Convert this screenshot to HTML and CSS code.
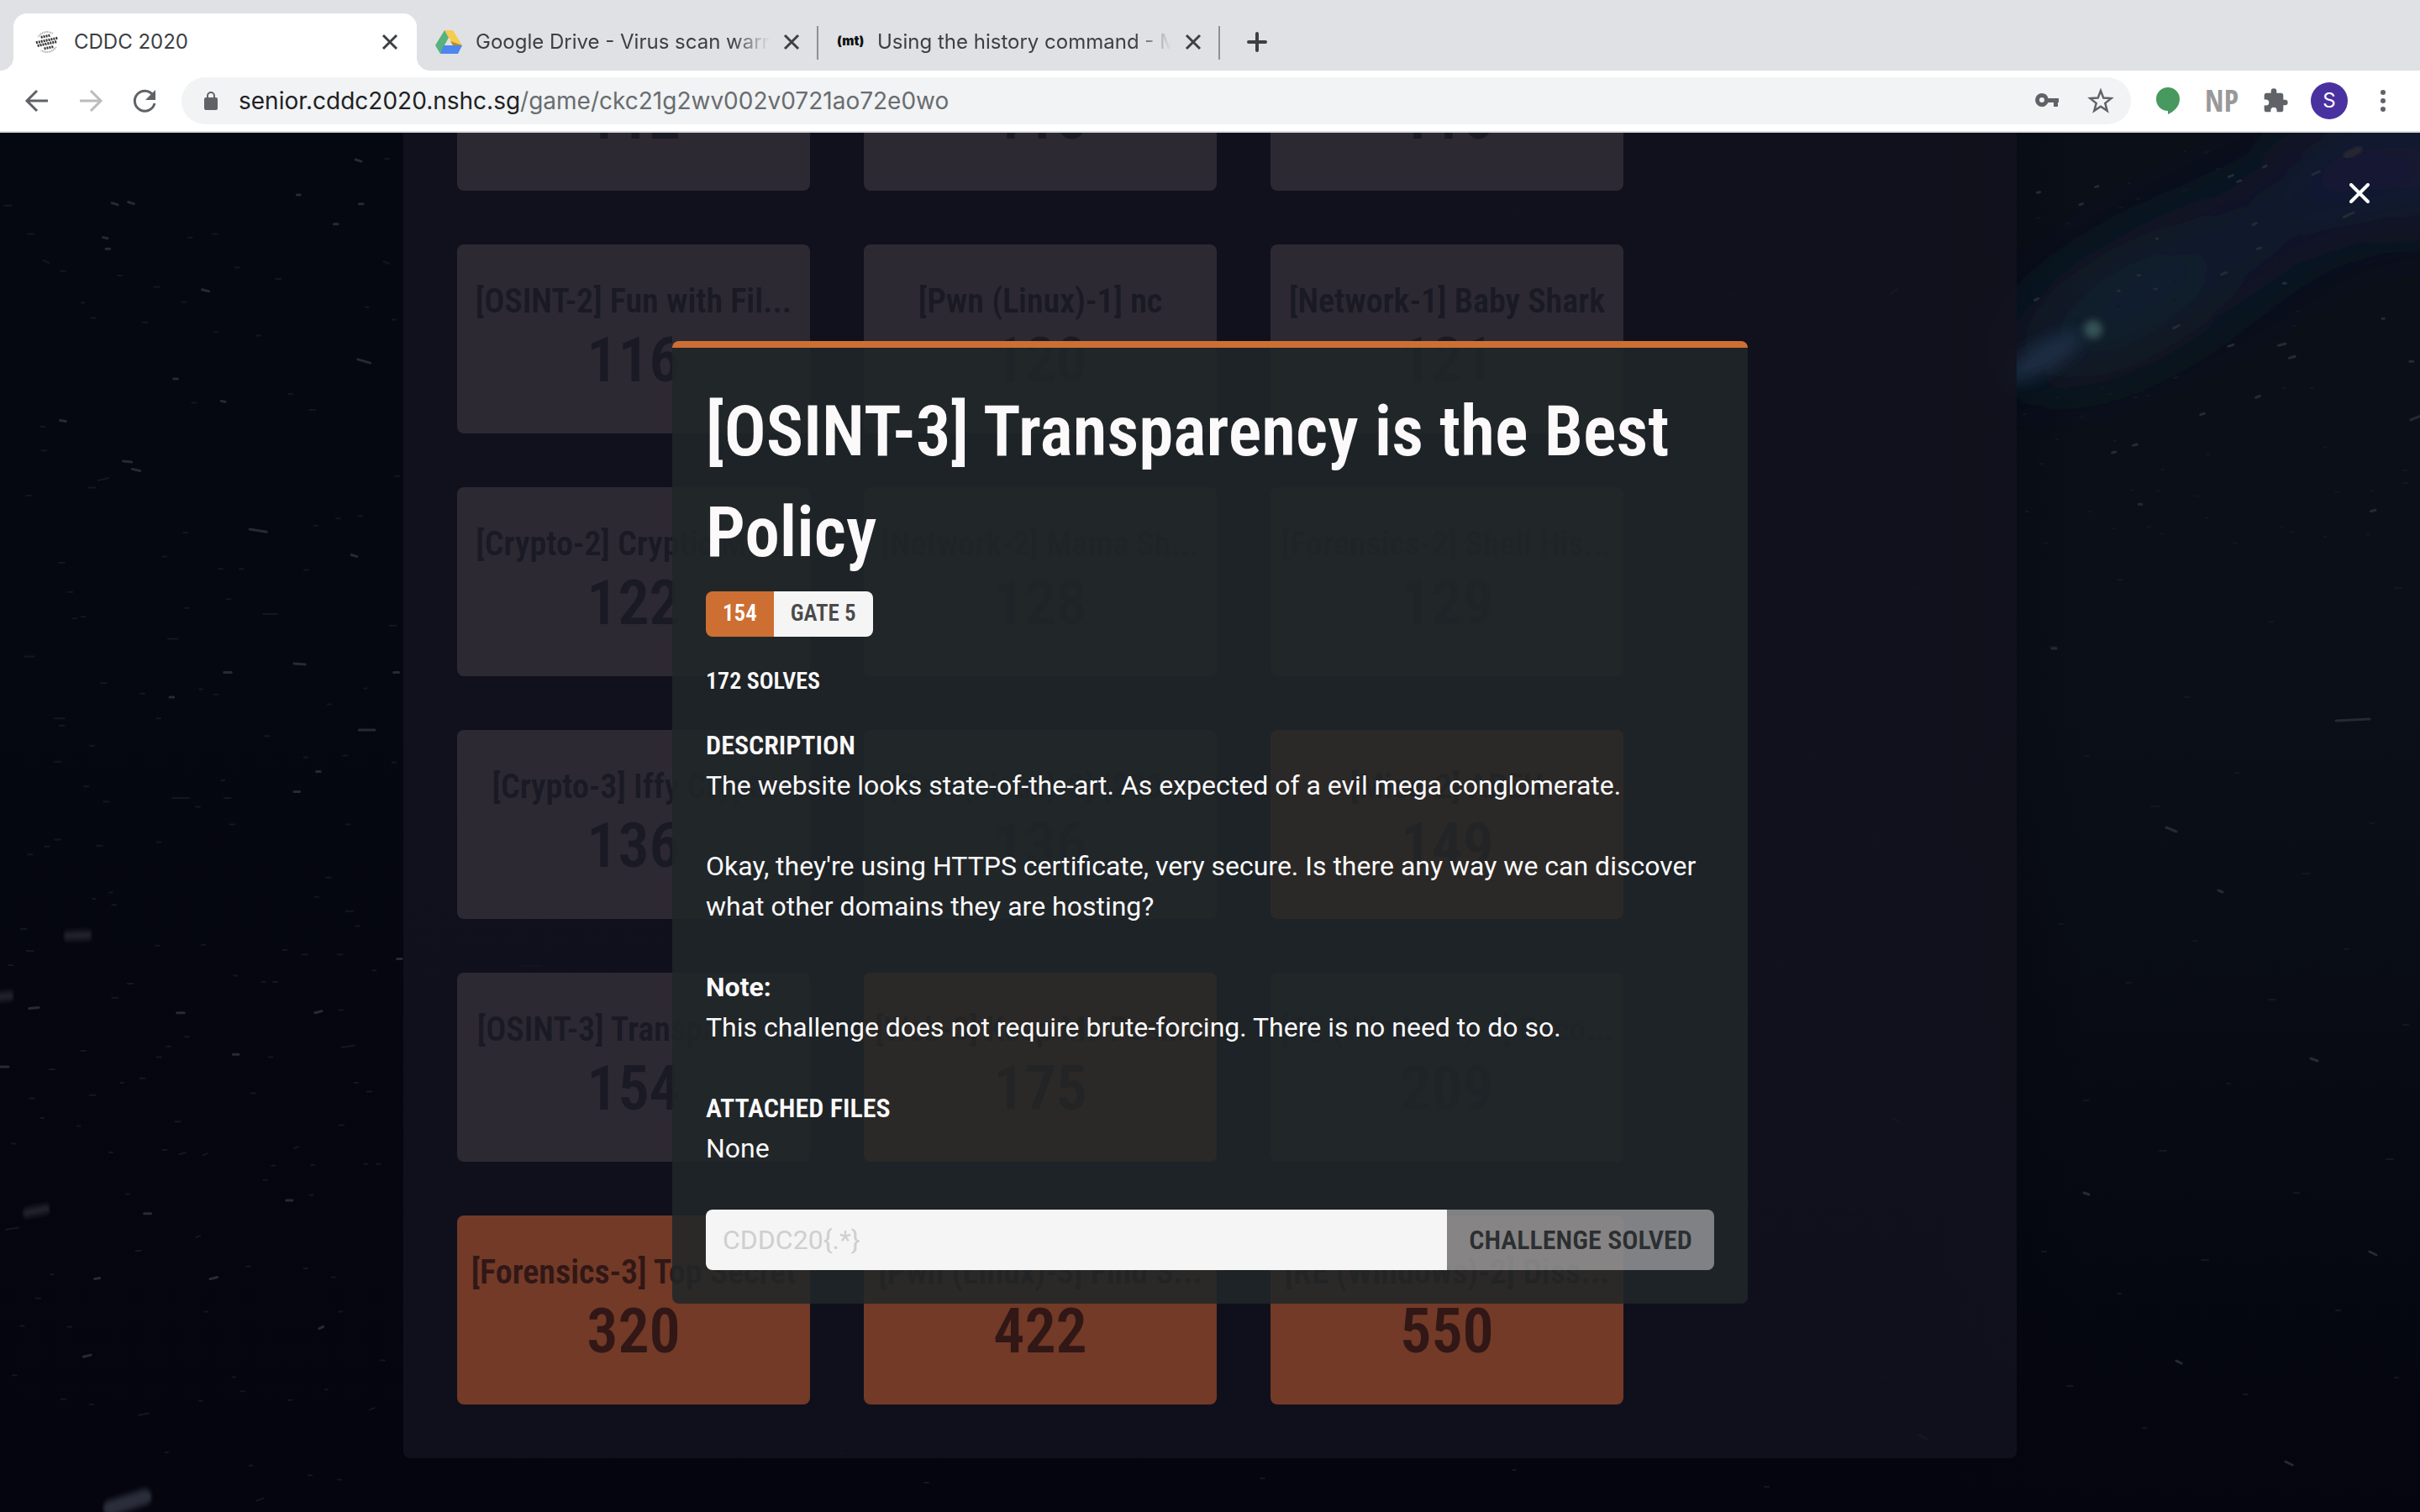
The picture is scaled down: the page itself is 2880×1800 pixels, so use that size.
FILE: index.html
```html
<!DOCTYPE html>
<html lang="en">
<head>
<meta charset="utf-8">
<title>CDDC 2020</title>
<link rel="stylesheet" href="styles.css">
</head>
<body>
<header class="browser">
  <nav class="tabs" aria-label="Tabs">
    <div class="tab tab-active">
      <svg class="tab-icon" viewBox="0 0 28 28" aria-hidden="true">
        <circle cx="14" cy="14" r="12" fill="none" stroke="#999" stroke-width="2" stroke-dasharray="1 1"/>
        <rect x="0" y="6" width="28" height="16" fill="#fff" transform="rotate(-12 14 14)"/>
        <g stroke="#333" stroke-width="3" stroke-dasharray="2 1" transform="rotate(-12 14 14)">
          <path d="M8 7h12M1 12h26M2 16h24M9 21h11"/>
        </g>
      </svg>
      <span class="tab-title">CDDC 2020</span>
      <button class="icon-button" aria-label="Close tab"><svg class="i20" viewBox="0 0 20 20"><path d="M2 2l16 16M18 2L2 18" stroke="#3c4043" stroke-width="3"/></svg></button>
    </div>
    <div class="tab tab-line">
      <svg class="tab-icon tab-icon-wide" viewBox="0 0 32 28" aria-hidden="true">
        <path d="M11 0h10l11 18H21z" fill="#f7cb4d"/>
        <path d="M11 0l5 9L6 28 0 18z" fill="#57b27c"/>
        <path d="M10 18h22l-5 10H6z" fill="#4c86ee"/>
        <path d="M16 9l5 9H11z" fill="#dfe1e5"/>
        <path d="M21 18l-3-5 14 5z" fill="#b28f2b"/>
      </svg>
      <span class="tab-title tab-fade">Google Drive - Virus scan warning</span>
      <button class="icon-button" aria-label="Close tab"><svg class="i20" viewBox="0 0 20 20"><path d="M2 2l16 16M18 2L2 18" stroke="#3c4043" stroke-width="3"/></svg></button>
    </div>
    <div class="tab tab-line">
      <span class="tab-icon tab-icon-wide tab-glyph">(mt)</span>
      <span class="tab-title tab-fade">Using the history command - Media Temple</span>
      <button class="icon-button" aria-label="Close tab"><svg class="i20" viewBox="0 0 20 20"><path d="M2 2l16 16M18 2L2 18" stroke="#3c4043" stroke-width="3"/></svg></button>
    </div>
    <button class="icon-button new-tab" aria-label="New tab"><svg class="i24" viewBox="0 0 24 24"><path d="M12 2v20M2 12h20" stroke="#3c4043" stroke-width="4" stroke-linecap="round"/></svg></button>
  </nav>
  <div class="toolbar">
    <button class="icon-button" aria-label="Back"><svg class="i32" viewBox="0 0 32 32"><path d="M29 16H4M16 4L4 16l12 12" fill="none" stroke="#5f6368" stroke-width="3"/></svg></button>
    <button class="icon-button" aria-label="Forward"><svg class="i32" viewBox="0 0 32 32"><path d="M3 16h25M16 4l12 12-12 12" fill="none" stroke="#babcbe" stroke-width="3"/></svg></button>
    <button class="icon-button" aria-label="Reload"><svg class="i32" viewBox="0 0 32 32"><path d="M26 9a12 12 0 1 0 2 10" fill="none" stroke="#5f6368" stroke-width="3"/><path d="M29 3v12H17z" fill="#5f6368"/></svg></button>
    <div class="omnibox">
      <svg class="lock" viewBox="0 0 18 24" aria-hidden="true"><rect x="1" y="8" width="16" height="15" rx="2" fill="#5f6368"/><path d="M5 9V6a4 4 0 0 1 8 0v3" fill="none" stroke="#5f6368" stroke-width="2"/></svg>
      <a class="url" href="#game"><span class="url-host">senior.cddc2020.nshc.sg</span>/game/ckc21g2wv002v0721ao72e0wo</a>
      <button class="icon-button" aria-label="Saved passwords"><svg class="i32" viewBox="0 0 32 32"><path fill="#5f6368" fill-rule="evenodd" d="M10 7a8 8 0 1 0 7.500 11H24v5h5v-5h1v-5H17.500A8 8 0 0 0 10 7zm0 5a3 3 0 1 1 0 6 3 3 0 0 1 0-6z"/></svg></button>
      <button class="icon-button" aria-label="Bookmark"><svg class="i32" viewBox="0 0 32 32"><path d="M16 4l3.300 8.600 9.200.5-7.200 5.800 2.400 8.900-7.700-5-7.700 5 2.400-8.900-7.200-5.800 9.200-.5z" fill="none" stroke="#5f6368" stroke-width="2.500"/></svg></button>
    </div>
    <button class="icon-button" aria-label="Chat extension"><svg class="i32" viewBox="0 0 32 32"><path d="M16 0a14 14 0 0 1 14 14c0 9-7 15-14 18v-4A14 14 0 0 1 16 0z" fill="#48995f"/></svg></button>
    <button class="icon-button np" aria-label="NP extension">NP</button>
    <button class="icon-button" aria-label="Extensions"><svg class="i32" viewBox="0 0 24 24"><path fill="#5f6368" d="M20.500 11H19V7c0-1.100-.9-2-2-2h-4V3.500a2.500 2.500 0 0 0-5 0V5H4c-1.100 0-2 .9-2 2v3.800h1.500a2.700 2.700 0 0 1 0 5.400H2V20c0 1.100.9 2 2 2h3.800v-1.500a2.700 2.700 0 0 1 5.400 0V22H17c1.100 0 2-.9 2-2v-4h1.500a2.500 2.500 0 0 0 0-5z"/></svg></button>
    <button class="avatar" aria-label="Profile">S</button>
    <button class="icon-button" aria-label="Menu"><svg class="i32" viewBox="0 0 32 32"><g fill="#5f6368"><circle cx="16" cy="6" r="3"/><circle cx="16" cy="16" r="3"/><circle cx="16" cy="26" r="3"/></g></svg></button>
  </div>
</header>

<main class="game" id="game">
  <svg class="sky" viewBox="0 158 2880 1642" preserveAspectRatio="xMidYMid slice" aria-hidden="true">
    <defs>
      <filter id="soft" x="-50%" y="-100%" width="200%" height="300%"><feGaussianBlur stdDeviation="45"/></filter>
      <filter id="glow" x="-50%" y="-100%" width="200%" height="300%"><feGaussianBlur stdDeviation="10"/></filter>
      <filter id="haze" x="-50%" y="-50%" width="200%" height="200%"><feGaussianBlur stdDeviation="4"/></filter>
    </defs>
    <g filter="url(#soft)">
      <ellipse cx="2620" cy="310" rx="280" ry="60" fill="#111a38" opacity=".7" transform="rotate(-28 2620 310)"/>
      <ellipse cx="2850" cy="200" rx="130" ry="60" fill="#1e2144" opacity=".7"/>
      <ellipse cx="2530" cy="370" rx="120" ry="40" fill="#1a2c36" opacity=".7" transform="rotate(-28 2530 370)"/>
    </g>
    <g filter="url(#glow)">
      <ellipse cx="2432" cy="425" rx="52" ry="16" fill="#20364c" opacity=".8" transform="rotate(-30 2432 425)"/>
    </g>
    <circle cx="2491" cy="392" r="11" fill="#355257" filter="url(#haze)"/>
    <g class="stars" transform="translate(0 150) scale(.3333 .95)">
      <g transform="scale(1 1.108)">
        <path class="star-dim" d="M15 90h25M100 122h20M155 152l20 3M215 164h18M290 200h12M325 217h16M420 169h14M510 222h16M145 340h14M150 367h16M95 418h16M315 409h24M350 401l38-3M210 494h20M243 527h16M260 557h14M290 555h14M90 600h32M195 670h36M212 678h18M360 630h20M550 182h20M650 199h14M670 126h16M760 122h16M840 160h14M985 173h18M915 237h16M765 233h14M1030 303h14M1105 321h20M685 313h16M580 487h14M655 460h14M780 501h14M855 501h14M940 552h50M1085 502h16M1120 452h14M1200 444h14M810 535h12M660 545h14M600 580h34M500 642h16M560 670h14M712 637h12M765 643h14M945 690h18M1085 714h14M1225 712h14M1165 850h16M1235 888h26M1330 955h12M1210 1000h14M1220 1042l46-2M960 1053h14M895 1094h18M725 1164l16-2M940 1192h14M1105 1209h14M640 1163l22-2M580 1158h16M625 1126h20M560 1053h16M595 1041h14M660 1030h16M500 1077h18M430 1082h12M400 986h20M455 970h22M290 1046h16M175 1067h20M105 1100h18M145 1122h12M275 1131h12M320 1096h20M42 1151h14M20 1248l46-2M128 1326h16M72 1357h14M240 1358h16M180 1299h12M45 1413h14M218 1440h16M320 1446h14M495 1458l36-2M590 1500h10M710 1442h12M860 1431h12M830 1415h10M730 1341h12M880 1290h14M700 1257l14-2M485 1272h18M450 1208h12M390 1161h12M1085 1292h12M1185 1302h12M1210 1341h12M1360 1396h14M1030 1441h12M1160 1429h10M1320 1452l16-2M1050 1156l16-2M1110 1175h14M1300 1174h12M1345 1174h14M1310 1092h18M1265 1082h14M1210 1130h18M970 1176h12M890 1515h12M940 1552l-24 3M1205 1531h14M1100 1526h14M160 815h16M195 807h22M100 824h16M345 814h20M370 764h18M300 747h16M195 719h22M320 701h16M560 810h14M615 760h60M700 770h14M790 740h12M800 760h24M820 790h18M1080 937h18M1205 937h16M1010 932h14M975 968h16M935 968h12M720 926h14M555 927h14M400 881h14M390 867h12M330 874h10M95 933h24M30 949h16M75 908h20M835 961h12M1300 636h10M1170 654h12M1400 720h14M1235 790h14M1125 872h12M1270 905h14M1390 565h24M1410 396h16M1370 153l20 3M1375 37h14M1400 219h14M1280 441h14M1305 205h12"/>
        <path class="star" d="M400 87l20 2M458 86l20 2M368 126l16 1M378 139h14M722 185l24 2M620 286h14M440 379l30 1M472 388l28 2M892 456l60 3M1050 608l40 1M800 618h26M1282 683h56M1278 264l44 4M1270 38l20 2M1282 88h14M1060 78h12M1255 485l20 2M1192 111h14M790 311l14 1M215 333l20 1M606 646h14M1050 753h20M1130 730h14M632 1003h26M832 1050h20M1125 1003l24-2M515 1230h24M1022 1215h22M338 1304l18-1M298 1392l26-2M750 1304l26-2M104 998l34-1M0 1064h30M1418 942h16M1140 1360l14-2M1406 618h18"/>
      </g>
      <g filter="url(#haze)">
        <path class="star-wide" d="M95 1362l70-5M0 1091l36-1M240 1015l75-1"/>
        <path class="star-comet" d="M395 1732l120-14"/>
      </g>
    </g>
    <g class="stars" transform="translate(2350 150) scale(.338 .3333)">
      <path class="star" d="M220 238l10-2M425 218l10-3M370 281l10-3M895 182l14-6M925 199l12-4M1017 147l10-5M1190 174l24-12M1300 325l34-16M980 353l12-6M870 530l16-6M1108 829l20-6M893 787l18-6M990 970l14-6M795 1031l14-4M558 1141l14-4M484 1167l12-3M578 1351h10M1395 1376l16-4M1535 1050l34-14M1532 841h12M1086 562h10M700 722l20-10M212 622l12-6M1070 784l24-6M995 439l12-4M1436 688h6M574 533h8M504 589h6M633 582h8M640 403h4"/>
      <path class="star-dim" d="M738 90h6M810 95l14-4M852 155l12-3M730 232l18-5M540 204h8M572 260h8M222 328h8M325 349h10M510 292h8M438 514h8M704 557h8M704 622h6M502 645h8M786 636h6M1060 468h6M1186 470h8M1132 662h8M1120 714h8M1180 76h8M1072 209h6M1076 275h6M700 900l14-4M318 937l10-3M288 970h6M172 1031l10-2M374 1040h8M450 935h8M470 958h12M560 969h12M608 962h8M490 1125h8M230 1206h10M286 1118h8M658 1227h8M818 1172h8M1084 937h10M1180 935h12M1230 1148h8M1510 1230h10M1508 1275h16M1396 1303h10M1270 1310l12-3M1230 1468h8M1112 1451h10M1076 1432h8M1382 1460h8M780 1322h8M644 1303h8M548 1301h10M400 1378h8M180 1377h8M484 1438h8M608 1432h10M656 1456h8M814 1400h8M912 1490h12M246 1490h8"/>
      <g filter="url(#haze)"><path class="star-wide" d="M1312 104l40-20"/></g>
    </g>
    <g class="stars">
      <path class="star-dim" d="M2440 770h8M2520 690h6M2600 830h6M2700 740h5M2480 900h6M2560 960h10M2660 920h4M2850 700h8M2820 980h5M2740 1040h8M2450 1100h5M2530 1170h6M2610 1120h4M2700 1190h8M2790 1130h5M2860 1220h6M2480 1310h5M2570 1370h8M2650 1290h4M2730 1420h6M2840 1380h8M2430 1490h5M2520 1540h4M2620 1500h8M2780 1560h5M2460 1650h7M2550 1700h4M2670 1660h5M2850 1640h4M530 200h5M1800 255h5M700 552h6M2060 350h5M2160 250h4M2250 400h5M2120 560h4M2280 700h5M2150 900h5M2230 1000h6M2120 1150h6M2260 1260h5M2200 1440h6M2140 1560h4M2240 1640h5M620 1150h22M560 1120h4M1000 1730h4M1100 1765h5M1500 1760h5M1800 1750h4M2100 1770h5"/>
      <path class="star" d="M2442 772h5M2578 985l12 5M2780 858l40-2M2640 1060l5 2M2750 1260l8 3M2480 1420l6 2M2820 1490l8 4M2590 1620l6 3M2720 1740l8 4M2250 350l8-6M2254 1332l6 4M2284 1708l10 6"/>
    </g>
  </svg>

  <section class="board" aria-label="Challenges">
    <article class="card"><p>112</p></article>
    <article class="card"><p>115</p></article>
    <article class="card"><p>116</p></article>
    <article class="card"><h3>[OSINT-2] Fun with Fil...</h3><p>116</p></article>
    <article class="card"><h3>[Pwn (Linux)-1] nc</h3><p>120</p></article>
    <article class="card"><h3>[Network-1] Baby Shark</h3><p>121</p></article>
    <article class="card"><h3>[Crypto-2] Cryptic Me...</h3><p>122</p></article>
    <article class="card"><h3>[Network-2] Mama Sh...</h3><p>128</p></article>
    <article class="card"><h3>[Forensics-2] Shell His...</h3><p>129</p></article>
    <article class="card"><h3>[Crypto-3] Iffy Crypto</h3><p>136</p></article>
    <article class="card"><h3>[Pwn (Linux)-2] (200...</h3><p>136</p></article>
    <article class="card card-open"><h3>[Misc-2] AREH</h3><p>149</p></article>
    <article class="card"><h3>[OSINT-3] Transparen...</h3><p>154</p></article>
    <article class="card card-open"><h3>[Web-3] Keep Me Posh...</h3><p>175</p></article>
    <article class="card"><h3>[RE (Windows)-1] Reco...</h3><p>209</p></article>
    <article class="card card-open"><h3>[Forensics-3] Top Secret</h3><p>320</p></article>
    <article class="card card-open"><h3>[Pwn (Linux)-3] Find S...</h3><p>422</p></article>
    <article class="card card-open"><h3>[RE (Windows)-2] Diss...</h3><p>550</p></article>
  </section>

  <div class="overlay">
    <button class="icon-button close" aria-label="Close"><svg class="i24" viewBox="0 0 24 24"><path d="M2 2l20 20M22 2L2 22" stroke="#fff" stroke-width="4" stroke-linecap="round"/></svg></button>
    <div class="modal" role="dialog" aria-labelledby="challenge-title">
      <h1 id="challenge-title">[OSINT-3] Transparency is the Best Policy</h1>
      <div class="badge"><span class="badge-points">154</span><span class="badge-gate">GATE 5</span></div>
      <p class="solves">172 SOLVES</p>
      <div class="body">
        <h2>DESCRIPTION</h2>
        <p>The website looks state-of-the-art. As expected of a evil mega conglomerate.</p>
        <p class="para">Okay, they're using HTTPS certificate, very secure. Is there any way we can discover what other domains they are hosting?</p>
        <p class="para"><b>Note:</b><br>This challenge does not require brute-forcing. There is no need to do so.</p>
        <h2 class="para">ATTACHED FILES</h2>
        <p>None</p>
      </div>
      <form class="answer">
        <input type="text" placeholder="CDDC20{.*}" aria-label="Flag">
        <button type="button" disabled>CHALLENGE SOLVED</button>
      </form>
    </div>
  </div>
</main>
</body>
</html>
```
FILE: styles.css
```css
* { box-sizing: border-box; }

html, body { height: 100%; }

body {
  margin: 0;
  display: flex;
  flex-direction: column;
  overflow: hidden;
  background: #050711;
  font-family: Roboto, "Liberation Sans", sans-serif;
}

h1, h2, h3, p { margin: 0; }
h1, h2, h3 { font-weight: 600; }
button { font: inherit; border: 0; padding: 0; }
svg { display: block; }

.i20 { width: 20px; height: 20px; }
.i24 { width: 24px; height: 24px; }
.i32 { width: 32px; height: 32px; }

.icon-button {
  display: flex;
  align-items: center;
  justify-content: center;
  flex: none;
  background: none;
}

/* Browser chrome */
.browser {
  flex: none;
  background: #fff;
  border-bottom: 2px solid #d9dbdf;
  font-family: Inter, "Liberation Sans", sans-serif;
}

.tabs {
  display: flex;
  height: 84px;
  padding: 16px 16px 0;
  background: #dfe1e5;
}

.tab {
  position: relative;
  display: flex;
  align-items: center;
  flex: 0 1 478px;
  min-width: 0;
  padding: 0 22px;
  gap: 16px;
  font-size: 24px;
  line-height: 32px;
  color: #3c4043;
}

.tab-active {
  flex-basis: 480px;
  padding-left: 26px;
  gap: 18px;
  background: #fff;
  border-radius: 16px 16px 0 0;
}

.tab-active::before,
.tab-active::after {
  content: "";
  position: absolute;
  bottom: 0;
  width: 16px;
  height: 16px;
}

.tab-active::before {
  right: 100%;
  background: radial-gradient(circle at 0 0, #dfe1e5 16px, #fff 16px);
}

.tab-active::after {
  left: 100%;
  background: radial-gradient(circle at 100% 0, #dfe1e5 16px, #fff 16px);
}

.tab-line::after {
  content: "";
  position: absolute;
  right: 0;
  top: 15px;
  width: 2px;
  height: 40px;
  background: #8e9194;
}

.tab-icon { flex: none; width: 28px; height: 28px; }
.tab-icon-wide { width: 32px; }

.tab-glyph {
  font-size: 15px;
  font-weight: 900;
  line-height: 26px;
  color: #111;
  text-align: center;
}

.tab-title {
  flex: 1;
  min-width: 0;
  overflow: hidden;
  white-space: nowrap;
}

.tab-fade {
  -webkit-mask-image: linear-gradient(to left, transparent, #000 44px);
  mask-image: linear-gradient(to left, transparent, #000 44px);
}

.new-tab { padding: 0 32px; }

.toolbar {
  display: flex;
  align-items: center;
  gap: 32px;
  height: 72px;
  padding: 0 28px;
}

.omnibox {
  display: flex;
  align-items: center;
  flex: 1;
  height: 56px;
  margin: 0 -4px;
  padding: 0 20px 0 26px;
  border-radius: 28px;
  background: #f1f3f4;
  gap: 32px;
}

.lock { flex: none; width: 18px; height: 24px; }

.url {
  flex: 1;
  margin-left: -8px;
  font-size: 28px;
  line-height: 36px;
  color: #696c70;
  text-decoration: none;
}

.url-host { color: #202124; }

.np {
  width: 32px;
  font-family: "Open Sans Condensed", "Roboto Condensed", Roboto, sans-serif;
  font-size: 36px;
  font-weight: 700;
  line-height: 32px;
  color: #999;
}

.avatar {
  flex: none;
  width: 44px;
  height: 44px;
  margin: 0 -6px;
  border-radius: 50%;
  background: #4a31a0;
  color: #fff;
  font-size: 24px;
  line-height: 44px;
}

/* Game page */
.game {
  position: relative;
  flex: 1;
  min-height: 0;
  display: flex;
  flex-direction: column;
  justify-content: flex-end;
  align-items: center;
  padding-bottom: 64px;
  overflow: hidden;
  background: linear-gradient(to top, rgba(4, 5, 14, 1), rgba(4, 5, 14, 0) 60%), linear-gradient(to right, #050711 16%, #060913 80%, #0b1018 86%);
}

.sky {
  position: absolute;
  inset: 0;
  width: 100%;
  height: 100%;
}

.stars path {
  fill: none;
  stroke-linecap: round;
  vector-effect: non-scaling-stroke;
}

.star-dim { stroke: #141721; stroke-width: 2px; }
.star { stroke: #272a35; stroke-width: 3px; }
.star-wide { stroke: #252732; stroke-width: 9px; }
.star-comet { stroke: #2b2d3a; stroke-width: 18px; }

.board {
  position: relative;
  display: grid;
  grid-template-columns: repeat(3, minmax(0, 420px));
  gap: 64px;
  width: 66.667%;
  padding: 64px;
  border-radius: 8px;
  background: rgba(19, 19, 30, .86);
}

.card {
  display: flex;
  flex-direction: column;
  justify-content: flex-end;
  height: 225px;
  padding: 0 12px 45px;
  border-radius: 8px;
  background: #2d2932;
  color: #191a24;
  font-family: "Roboto Condensed", Roboto, sans-serif;
  text-align: center;
  white-space: nowrap;
}

.card h3 { font-size: 40px; line-height: 56px; }
.card p { font-size: 74px; line-height: 84px; font-weight: 600; }

.card-open { background: #723a27; color: #311716; }

/* Challenge dialog */
.overlay {
  position: absolute;
  inset: 0;
  display: flex;
  align-items: center;
  justify-content: center;
}

.close {
  position: absolute;
  top: 48px;
  right: 48px;
  width: 48px;
  height: 48px;
}

.modal {
  width: 1280px;
  max-width: 90%;
  padding: 40px;
  border-top: 8px solid #cd6f33;
  border-radius: 8px;
  background: rgba(32, 38, 40, .86);
  background-clip: padding-box;
  color: #fbf9fa;
}

.modal h1,
.modal h2,
.badge,
.solves,
.answer button {
  font-family: "Roboto Condensed", Roboto, sans-serif;
  font-weight: 600;
}

.modal h1 { font-size: 83px; line-height: 120px; }

.badge {
  display: inline-flex;
  margin-top: 10px;
  border-radius: 8px;
  overflow: hidden;
  font-size: 27px;
  line-height: 52px;
  vertical-align: top;
}

.badge span { height: 54px; padding: 0 20px; }
.badge-points { background: #cd6f33; color: #fff; }
.badge-gate { background: #f5f5f5; color: #4a4a4a; }

.solves { margin-top: 33px; font-size: 28px; line-height: 40px; }

.body { margin-top: 32px; font-size: 32px; line-height: 48px; }
.modal h2 { font-size: 32px; line-height: 48px; }
.modal .para { margin-top: 48px; }

.answer {
  display: flex;
  height: 72px;
  margin-top: 49px;
  border-radius: 8px;
  overflow: hidden;
}

.answer input {
  flex: 1;
  min-width: 0;
  padding: 0 20px;
  border: 0;
  background: #f5f5f5;
  color: #4a4a4a;
  font: 32px/48px Roboto, sans-serif;
}

.answer input::placeholder { color: #cfcfcf; opacity: 1; }

.answer button {
  padding: 0 26px;
  background: rgba(245, 240, 245, .46);
  color: #2b2f31;
  font-size: 32px;
}
```
